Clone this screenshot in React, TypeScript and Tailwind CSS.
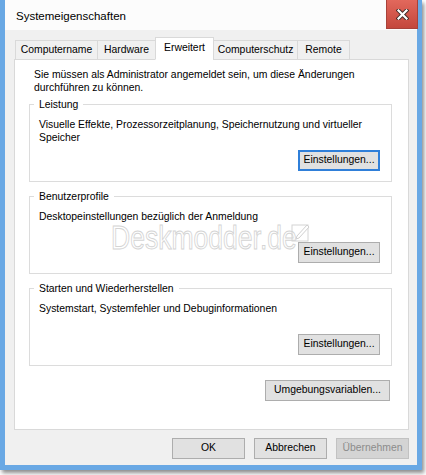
import type { ReactNode } from 'react';

function Btn({
  children,
  className = '',
  focused = false,
  disabled = false,
}: {
  children: ReactNode;
  className?: string;
  focused?: boolean;
  disabled?: boolean;
}) {
  const look = disabled
    ? 'bg-[#d4d4d4] border border-[#c2c2c2] text-[#8c8c8c]'
    : focused
      ? 'bg-[#e1e1e1] border-2 border-[#2f7fd9] text-black'
      : 'bg-[#e1e1e1] border border-[#adadad] text-black';
  return (
    <button
      className={`h-[21px] flex items-center justify-center leading-none ${look} ${className}`}
    >
      {children}
    </button>
  );
}

function Group({
  title,
  lines,
  focused = false,
  className = '',
}: {
  title: string;
  lines: string[];
  focused?: boolean;
  className?: string;
}) {
  return (
    <fieldset className={`border border-[#dcdcdc] ${className}`}>
      <legend className="ml-[4px] px-[5px] leading-[13px]">{title}</legend>
      <div className="pl-[9px] pr-[11px] pt-[7px] pb-[10px] flex flex-col">
        <div className="min-h-[26px] leading-[13px] whitespace-nowrap">
          {lines.map((l) => (
            <div key={l}>{l}</div>
          ))}
        </div>
        <div className="mt-[6px] flex justify-end">
          <Btn focused={focused} className="w-[82px]">
            Einstellungen...
          </Btn>
        </div>
      </div>
    </fieldset>
  );
}

const tabs = [
  { label: 'Computername', w: 'w-[83px]' },
  { label: 'Hardware', w: 'w-[59px]' },
  { label: 'Erweitert', w: 'w-[59px]', active: true },
  { label: 'Computerschutz', w: 'w-[85px]' },
  { label: 'Remote', w: 'w-[53px]' },
];

export default function App() {
  return (
    <div className="w-[426px] h-[475px] bg-white overflow-hidden font-['Liberation_Sans',Arial,sans-serif] text-[10.4px] text-black">
      <div className="w-[422px] h-[470px] flex flex-col border-x-[5px] border-b-[5px] border-[#69a8e4] bg-[#f0f0f0] shadow-[2px_3px_4px_rgba(0,0,0,0.45)]">
        {/* title bar */}
        <div className="h-[30px] bg-[#fcfcfc] flex items-start justify-between">
          <div className="pl-[11px] pt-[9px] text-[11.5px] leading-[14px]">Systemeigenschaften</div>
          <div className="w-[32px] h-[29px] mr-[-1px] flex items-center justify-center border border-t-0 border-[#a8423a] bg-[linear-gradient(to_bottom,#e2685c,#c4473c)]">
            <svg width="13" height="11" viewBox="0 0 13 11">
              <path d="M2.5 1.5 L10.5 9.5 M10.5 1.5 L2.5 9.5" stroke="#3b2a28" strokeWidth="4" strokeLinecap="square" />
              <path d="M2.5 1.5 L10.5 9.5 M10.5 1.5 L2.5 9.5" stroke="#ffffff" strokeWidth="2.2" strokeLinecap="square" />
            </svg>
          </div>
        </div>

        {/* body */}
        <div className="flex-1 flex flex-col pl-[9px] pr-[8px] pt-[7px]">
          <div className="flex items-end pl-[1px] -mb-px relative z-10 h-[23px]">
            {tabs.map((t, i) =>
              t.active ? (
                <div
                  key={t.label}
                  className={`${t.w} h-[23px] -ml-px bg-white border border-[#d9d9d9] border-b-white flex items-center justify-center pb-[2px]`}
                >
                  {t.label}
                </div>
              ) : (
                <div
                  key={t.label}
                  className={`${t.w} h-[20px] ${i > 0 ? '-ml-px' : ''} bg-[#f0f0f0] border border-[#d9d9d9] flex items-center justify-center`}
                >
                  {t.label}
                </div>
              ),
            )}
          </div>

          <div className="relative h-[371px] bg-white border border-[#d9d9d9] pl-[14px] pr-[16px] flex flex-col">
            <div className="pl-[5px] pt-[8px] leading-[13px] whitespace-nowrap">
              <div>Sie müssen als Administrator angemeldet sein, um diese Änderungen</div>
              <div>durchführen zu können.</div>
            </div>

            <Group
              className="mt-[4px]"
              title="Leistung"
              focused
              lines={[
                'Visuelle Effekte, Prozessorzeitplanung, Speichernutzung und virtueller',
                'Speicher',
              ]}
            />
            <Group
              className="mt-[8px]"
              title="Benutzerprofile"
              lines={['Desktopeinstellungen bezüglich der Anmeldung']}
            />
            <Group
              className="mt-[8px]"
              title="Starten und Wiederherstellen"
              lines={['Systemstart, Systemfehler und Debuginformationen']}
            />

            <div className="mt-[14px] flex justify-end pr-[2px]">
              <Btn className="w-[125px]">Umgebungsvariablen...</Btn>
            </div>

            {/* watermark */}
            <div className="absolute left-[96px] top-[164px] flex items-start pointer-events-none">
              <span className="text-[34px] leading-[26px] text-transparent [-webkit-text-stroke:1px_#d4d4d4] scale-x-[0.78] origin-left inline-block w-[180px] whitespace-nowrap">
                Deskmodder.de
              </span>
              <svg width="20" height="20" viewBox="0 0 20 20" className="-mt-[2px]">
                <rect x="1" y="3" width="16" height="16" fill="none" stroke="#d4d4d4" />
                <path d="M6 14 L16 3 L18 5 L8 16 L5 17 Z" fill="#fff" stroke="#d0d0d0" />
              </svg>
            </div>
          </div>

          <div className="mt-[8px] flex justify-end gap-[9px]">
            <Btn className="w-[73px]">OK</Btn>
            <Btn className="w-[73px]">Abbrechen</Btn>
            <Btn className="w-[73px]" disabled>
              Übernehmen
            </Btn>
          </div>
        </div>
      </div>
    </div>
  );
}
